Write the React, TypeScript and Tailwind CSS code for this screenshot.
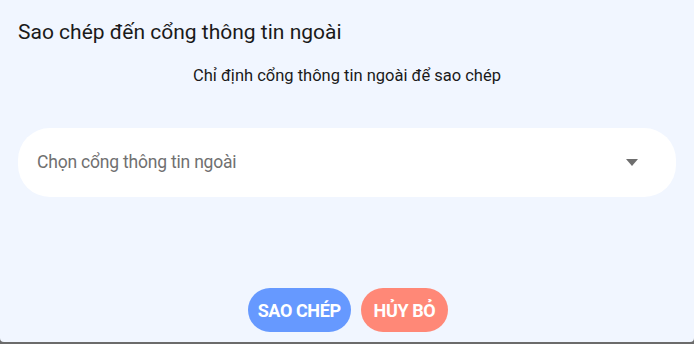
export default function App() {
  return (
    <div className="w-[694px] h-[344px] bg-[#6b6b6b] overflow-hidden" style={{ fontFamily: "Roboto, 'Noto Sans', sans-serif" }}>
      <div className="h-[342px] bg-[#f1f6ff] rounded-b-[4px] flex flex-col">
        <h2 className="pl-[18px] pt-[19px] text-[21px] leading-[26px] text-[#1a1a1a]">
          Sao chép đến cổng thông tin ngoài
        </h2>
        <p className="mt-[20px] text-center text-[16.5px] leading-[21px] text-[#1a1a1a]">
          Chỉ định cổng thông tin ngoài để sao chép
        </p>
        <div className="mx-[18px] mt-[42px] h-[69px] rounded-[32px] bg-white flex items-center justify-between pl-[19px] pr-[38px]">
          <span className="text-[17.5px] text-[#707070] tracking-[-0.2px]">Chọn cổng thông tin ngoài</span>
          <svg width="12" height="7" viewBox="0 0 12 7">
            <path d="M0 0h12L6 7z" fill="#6e6e6e" />
          </svg>
        </div>
        <div className="mt-auto mb-[10px] flex justify-center gap-[10px] pl-[2px]">
          <button className="h-[44px] px-[10px] rounded-full bg-[#6699ff] text-white font-bold text-[18px] tracking-[-0.4px]">
            SAO CHÉP
          </button>
          <button className="h-[44px] px-[13px] rounded-full bg-[#ff8877] text-white font-bold text-[18px] tracking-[-0.4px]">
            HỦY BỎ
          </button>
        </div>
      </div>
    </div>
  );
}
